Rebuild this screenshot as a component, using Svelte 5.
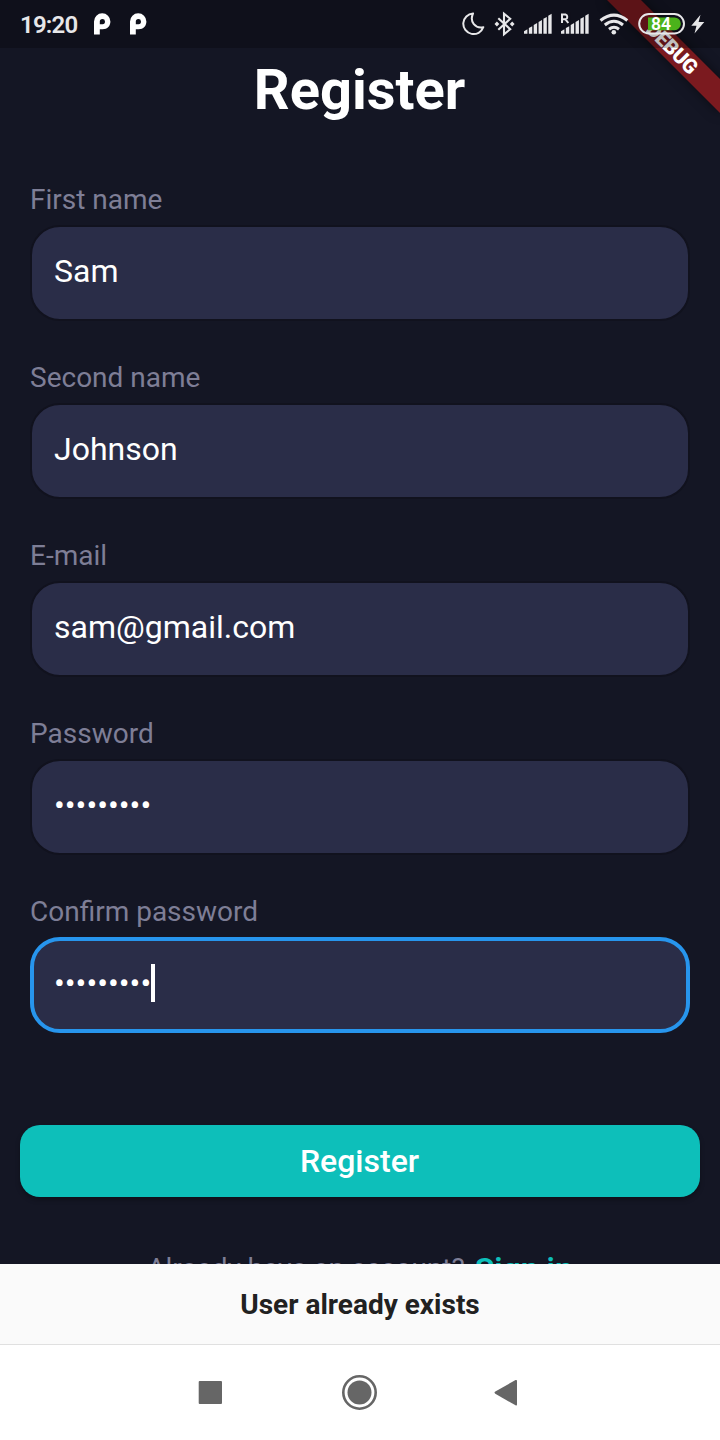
<script>
  const fields = [
    { label: 'First name', value: 'Sam' },
    { label: 'Second name', value: 'Johnson' },
    { label: 'E-mail', value: 'sam@gmail.com' },
    { label: 'Password', value: '•••••••••' },
    { label: 'Confirm password', value: '•••••••••', focused: true }
  ];
  const bars = [0, 1, 2, 3, 4, 5];
</script>

{#snippet signal()}
  {#each bars as i}
    <path d={`M${i * 4.85} ${17.4 - i * 3.1}L${i * 4.85 + 3.4} ${15.5 - i * 3.1}V20H${i * 4.85}Z`} />
  {/each}
{/snippet}

{#snippet note()}
  <path fill="#fff" fill-rule="evenodd" d="M0 21.5V8.5A8.2 8.2 0 0 1 16.4 8.5C16.4 13 13.5 16.2 8.6 16.2H5.8V21.5ZM5.8 8.6V11.2H8.6A2.6 2.6 0 1 0 5.8 8.6Z" />
{/snippet}

<div class="screen">
  <header class="status">
    <span class="time">19:20</span>
    <svg class="note first" width="17" height="22" viewBox="0 0 17 22">{@render note()}</svg>
    <svg class="note" width="17" height="22" viewBox="0 0 17 22">{@render note()}</svg>
    <svg class="system" width="258" height="48" viewBox="462 0 258 48" fill="#e7e7e9">
      <path d="M473 13.5A10.3 10.3 0 1 0 483.3 27.2C475.5 28.8 469.2 22 473 13.5Z" fill="none" stroke="#e7e7e9" stroke-width="2" stroke-linejoin="round" />
      <path d="M498.3 18.2L510.2 29.2L504 34.2V13.8L510.2 18.8L498.3 29.8" fill="none" stroke="#e7e7e9" stroke-width="2.1" />
      <path d="M496.9 21.6L499.3 24L496.9 26.4L494.5 24ZM512.2 21.6L514.6 24L512.2 26.4L509.8 24Z" />
      <g transform="translate(524 13.8)">{@render signal()}</g>
      <g transform="translate(561 13.8)">{@render signal()}</g>
      <path d="M560 12H570.2V25H560Z" fill="#10111b" />
      <path d="M562 23V14.5H565.5A2.5 2.5 0 0 1 565.5 19.3H562M565.5 19.3L568.3 23" fill="none" stroke="#e7e7e9" stroke-width="2" />
      <g fill="none" stroke="#e7e7e9" stroke-width="3">
        <path d="M600.5 20.5Q614 9.8 627.3 20.5" />
        <path d="M604.8 25Q614 17.4 623 25" />
        <path d="M609 29.2Q614 25.3 619 29.2" />
      </g>
      <circle cx="613.8" cy="32.2" r="2.3" />
      <rect x="639.2" y="14" width="44.8" height="19.5" rx="9.75" fill="none" stroke="#e7e7e9" stroke-width="2" />
      <path d="M648 17.5H674.5A6.3 6.3 0 0 1 674.5 30.2H648Z" fill="#4bb31b" />
      <text x="651" y="29.8" class="charge">84</text>
      <path d="M700.5 14.7L691.3 25.7H696.5L694.5 33.5L704.3 22H698.6Z" />
    </svg>
  </header>

  <div class="banner"><span>DEBUG</span></div>

  <main>
    <h1>Register</h1>
    <form>
      {#each fields as field}
        <div class="field">
          <span class="label">{field.label}</span>
          <div class="box" class:focused={field.focused}>
            <span class="value">{field.value}</span>
            {#if field.focused}<i class="caret"></i>{/if}
          </div>
        </div>
      {/each}
    </form>
    <button type="button">Register</button>
    <p class="signin"><span>Already have an account?</span><b>Sign in</b></p>
  </main>

  <div class="snack">User already exists</div>
  <nav>
    <svg width="720" height="95" viewBox="0 1345 720 95" fill="#666">
      <rect x="198.7" y="1381" width="23.3" height="23" rx="1" />
      <circle cx="359.5" cy="1392.5" r="12" />
      <circle cx="359.5" cy="1392.5" r="16.2" fill="none" stroke="#666" stroke-width="2.6" />
      <path d="M495.3 1391.6L515.5 1380.1Q517 1379.4 517 1381V1404.5Q517 1406 515.5 1405.3L495.3 1393.7Q493.7 1392.6 495.3 1391.6Z" />
    </svg>
  </nav>
</div>

<style>
  .screen {
    position: relative;
    width: 720px;
    height: 1440px;
    overflow: hidden;
    display: flex;
    flex-direction: column;
    background: #141624;
    color: #fff;
    font-family: Roboto, sans-serif;
  }
  .status {
    position: relative;
    z-index: 2;
    display: flex;
    align-items: center;
    flex: none;
    height: 48px;
    padding-left: 20px;
    box-sizing: border-box;
    background: rgba(0, 0, 0, 0.25);
  }
  .time {
    width: 58px;
    font-size: 24px;
    font-weight: 600;
    line-height: 28px;
    letter-spacing: -0.8px;
    color: #e7e7e9;
    padding-top: 2px;
    white-space: nowrap;
  }
  .note { margin-left: 19px; }
  .note.first { margin-left: 16px; }
  .system { margin-left: auto; }
  .charge {
    font: 600 17.5px Roboto, sans-serif;
    fill: #fff;
  }
  .banner {
    position: absolute;
    z-index: 1;
    left: 592px;
    top: 36px;
    width: 160px;
    height: 24px;
    transform: rotate(45deg);
    background: rgba(183, 28, 28, 0.63);
    box-shadow: 0 0 12px rgba(0, 0, 0, 0.5);
    text-align: center;
    font-size: 20.4px;
    font-weight: 900;
    letter-spacing: -0.5px;
    line-height: 24px;
  }
  main {
    height: 1216px;
    overflow: hidden;
    display: flex;
    flex-direction: column;
  }
  h1 {
    margin: 9px 1px 0 0;
    text-align: center;
    font-size: 56px;
    line-height: 66px;
    font-weight: 700;
  }
  form {
    display: flex;
    flex-direction: column;
    gap: 40px;
    padding: 60px 30px 0;
  }
  .field {
    display: flex;
    flex-direction: column;
    height: 138px;
    justify-content: space-between;
  }
  .label {
    font-size: 28px;
    line-height: 33px;
    color: #7e7e96;
  }
  .box {
    height: 96px;
    box-sizing: border-box;
    border: 2px solid #11121e;
    border-radius: 30px;
    background: #2a2d48;
    display: flex;
    align-items: flex-start;
    padding: 25px 22px 0;
  }
  .value {
    font-size: 32px;
    line-height: 38px;
    white-space: pre;
  }
  .focused {
    border: 4px solid #2795ed;
    padding: 23px 20px 0;
  }
  .caret {
    width: 4px;
    height: 38px;
    background: #fff;
  }
  button {
    flex: none;
    height: 72px;
    margin: 92px 20px 0;
    border: 0;
    border-radius: 20px;
    background: #0dbfba;
    box-shadow: 0 3px 5px rgba(0, 0, 0, 0.28);
    color: #fff;
    font: 500 32px/72px Roboto, sans-serif;
    padding: 0 1px 0 0;
  }
  .signin {
    display: flex;
    justify-content: center;
    align-items: flex-start;
    gap: 10px;
    flex: none;
    margin: 53px 0 0;
    font-size: 28px;
    line-height: 33px;
    color: #7e7e96;
  }
  .signin span {
    padding-top: 2px;
  }
  .signin b {
    color: #0dbfba;
    font-size: 32px;
    font-weight: 600;
    line-height: 38px;
  }
  .snack {
    height: 80px;
    flex: none;
    background: #fafafa;
    color: #212121;
    text-align: center;
    font-size: 28px;
    font-weight: 700;
    line-height: 82px;
  }
  nav {
    height: 96px;
    flex: none;
    box-sizing: border-box;
    border-top: 1px solid #e0e0e0;
    background: #fff;
  }
  nav svg { display: block; }
</style>
